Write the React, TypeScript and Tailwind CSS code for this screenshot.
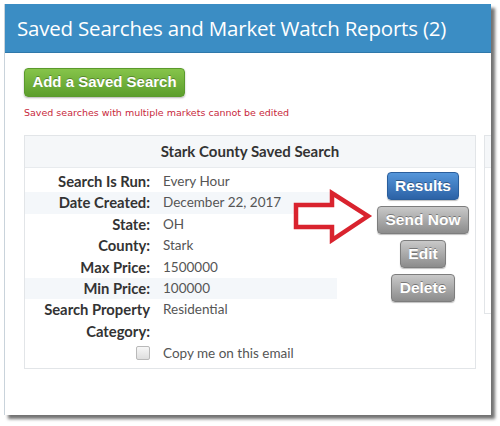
import React from "react";

const rows: { label: string; value: string; striped?: boolean }[] = [
  { label: "Search Is Run:", value: "Every Hour" },
  { label: "Date Created:", value: "December 22, 2017", striped: true },
  { label: "State:", value: "OH" },
  { label: "County:", value: "Stark" },
  { label: "Max Price:", value: "1500000" },
  { label: "Min Price:", value: "100000", striped: true },
  { label: "Search Property Category:", value: "Residential" },
];

const btnBase =
  "h-[28px] rounded-[4px] border text-white font-bold text-[15.5px] leading-none [text-shadow:0_-1px_0_rgba(0,0,0,0.35)] shadow-[0_1px_1px_rgba(0,0,0,0.25)]";

const grayBtn = `${btnBase} border-[#7d7d7d] bg-gradient-to-b from-[#c9c9c9] to-[#8c8c8c]`;

export default function App() {
  return (
    <div className="w-[500px] h-[426px] bg-white pl-[4px] pt-[4px] font-['Lato',sans-serif]">
      <div className="relative w-[487px] h-[411px] bg-white border-l border-[#c9d3db] shadow-[4px_4px_3px_rgba(0,0,0,0.55)] overflow-hidden">
        {/* header */}
        <div className="h-[49px] bg-[#3b8dc4] border-b border-[#2f78aa] flex items-center px-[12px]">
          <h1 className="text-white text-[20.5px] font-['Open_Sans',sans-serif] tracking-[-0.2px]">
            Saved Searches and Market Watch Reports (2)
          </h1>
        </div>

        <div className="pl-[19px] pt-[15px]">
          <button className="h-[29px] w-[161px] rounded-[4px] border border-[#5a9a2c] bg-gradient-to-b from-[#86c44a] to-[#5c9e2c] text-white font-bold text-[15px] font-['Liberation_Sans',sans-serif] [text-shadow:0_-1px_0_rgba(0,0,0,0.3)] shadow-[0_1px_2px_rgba(0,0,0,0.3)]">
            Add a Saved Search
          </button>
          <p className="mt-[11px] text-[9.5px] leading-[10px] text-[#c8283c] font-['DejaVu_Sans',sans-serif]">
            Saved searches with multiple markets cannot be edited
          </p>

          <div className="mt-[17px] flex gap-[8px] items-start">
            {/* card */}
            <div className="relative w-[452px] shrink-0 border border-[#e2e5e8] bg-white">
              <div className="h-[32px] bg-[#f5f7f9] border-b border-[#e8ebee] flex items-center justify-center">
                <span className="font-bold text-[15px] text-[#333]">Stark County Saved Search</span>
              </div>
              <div className="flex pt-[3px] pb-[4px]">
                <div className="w-[312px]">
                  {rows.map((r) => (
                    <div
                      key={r.label}
                      className={`grid grid-cols-[125px_1fr] gap-x-[13px] leading-[21.4px] ${
                        r.striped ? "bg-[#f4f7fa]" : ""
                      }`}
                    >
                      <span className="font-bold text-[14.8px] text-[#333] text-right">{r.label}</span>
                      <span className="text-[#555] text-[13.5px]">{r.value}</span>
                    </div>
                  ))}
                  <div className="grid grid-cols-[125px_1fr] gap-x-[13px] text-[13.5px] leading-[22px]">
                    <span className="flex justify-end items-center">
                      <span className="w-[14px] h-[14px] rounded-[2px] border border-[#b9b9b9] bg-gradient-to-b from-[#f7f7f7] to-[#dedede]" />
                    </span>
                    <span className="text-[#555]">Copy me on this email</span>
                  </div>
                </div>
                <div className="flex-1 flex flex-col items-center gap-[6px] pl-[34px] pt-[1px] font-['Liberation_Sans',sans-serif]">
                  <button className={`${btnBase} w-[72px] border-[#2a5e9c] bg-gradient-to-b from-[#5596da] to-[#2c62a6]`}>
                    Results
                  </button>
                  <button className={`${grayBtn} w-[92px]`}>Send Now</button>
                  <button className={`${grayBtn} w-[46px]`}>Edit</button>
                  <button className={`${grayBtn} w-[64px]`}>Delete</button>
                </div>
              </div>
            </div>
            {/* second card peeking */}
            <div className="w-[120px] h-[179px] shrink-0 border border-[#e2e5e8] bg-white">
              <div className="h-[32px] bg-[#f5f7f9] border-b border-[#e8ebee]" />
            </div>
          </div>
        </div>

        {/* red arrow annotation */}
        <svg
          className="absolute left-[283px] top-[184px]"
          width="90"
          height="56"
          viewBox="0 0 90 56"
        >
          <path
            d="M8 17 L44 17 L44 5 L80 28 L44 52 L44 39 L8 39 Z"
            fill="white"
            stroke="#d9232e"
            strokeWidth="4.5"
            strokeLinejoin="miter"
          />
        </svg>
      </div>
    </div>
  );
}
